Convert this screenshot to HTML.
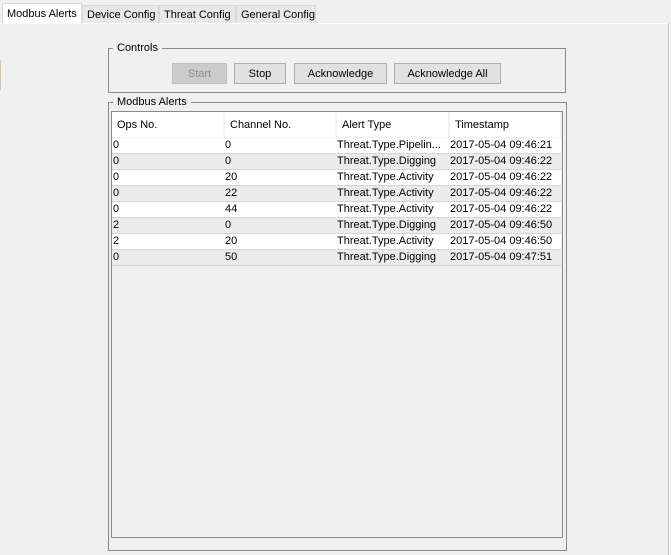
<!DOCTYPE html>
<html><head><style>
*{margin:0;padding:0;box-sizing:border-box}
body{width:671px;height:555px;background:#f0f0f0;font-family:"Liberation Sans",Arial,sans-serif;font-size:11px;color:#000;position:relative;overflow:hidden}
.abs{position:absolute}
.tab{position:absolute;top:5px;height:18px;border:1px solid #d9d9d9;border-bottom:none;background:#e8e8e8;padding:3px 4px 0;white-space:nowrap;font-size:11px}
.sel{top:3px;height:21px;background:#fff;border-color:#d9d9d9;padding-top:4px;z-index:2}
.grp{position:absolute;border:1px solid #8a8a8a}
.lbl{position:absolute;background:#f0f0f0;padding:0 4px;top:-7px;left:4px}
.btn{position:absolute;top:63px;height:21px;border:1px solid #adadad;background:#e1e1e1;text-align:center;line-height:20px}
table{border-collapse:collapse;table-layout:fixed;position:absolute;left:112px;top:112px;width:449px}
td{height:16px;padding:0 1px;white-space:nowrap;overflow:hidden;font-size:11px;line-height:15px}
th{height:25px;font-weight:normal;text-align:left;padding-left:5px;padding-top:2px;background:#fff;border-right:2px solid #f0f0f0;border-bottom:1px solid #f0f0f0}
tr.o td{background:#fff}tr.e td{background:#ececec}
tr td{border-bottom:1px solid #d4d4d4}
</style></head><body>
<div class="abs" style="left:0;top:23px;width:668px;height:1px;background:#fff"></div>
<div class="abs" style="left:668px;top:23px;width:1px;height:532px;background:#c8c8c8"></div>
<div class="abs" style="left:0;top:60px;width:1px;height:30px;background:#d0c8b0"></div>
<div class="tab sel" style="left:2px;width:80px">Modbus Alerts</div>
<div class="tab" style="left:82px;width:77px">Device Config</div>
<div class="tab" style="left:159px;width:77px">Threat Config</div>
<div class="tab" style="left:236px;width:80px">General Config</div>

<div class="grp" style="left:108px;top:48px;width:458px;height:45px"><span class="lbl">Controls</span></div>
<div class="btn" style="left:172px;width:55px;color:#8d8d8d;background:#cccccc;border-color:#bfbfbf">Start</div>
<div class="btn" style="left:234px;width:52px">Stop</div>
<div class="btn" style="left:294px;width:93px">Acknowledge</div>
<div class="btn" style="left:394px;width:107px">Acknowledge All</div>

<div class="grp" style="left:108px;top:102px;width:459px;height:449px"><span class="lbl">Modbus Alerts</span></div>
<div class="abs" style="left:111px;top:111px;width:452px;height:427px;border:1px solid #8a8a8a"></div>
<table>
<colgroup><col style="width:112px"><col style="width:112px"><col style="width:113px"><col style="width:112px"></colgroup>
<tr><th>Ops No.</th><th>Channel No.</th><th>Alert Type</th><th>Timestamp</th></tr>
<tr class="o"><td>0</td><td>0</td><td>Threat.Type.Pipelin...</td><td>2017-05-04 09:46:21</td></tr>
<tr class="e"><td>0</td><td>0</td><td>Threat.Type.Digging</td><td>2017-05-04 09:46:22</td></tr>
<tr class="o"><td>0</td><td>20</td><td>Threat.Type.Activity</td><td>2017-05-04 09:46:22</td></tr>
<tr class="e"><td>0</td><td>22</td><td>Threat.Type.Activity</td><td>2017-05-04 09:46:22</td></tr>
<tr class="o"><td>0</td><td>44</td><td>Threat.Type.Activity</td><td>2017-05-04 09:46:22</td></tr>
<tr class="e"><td>2</td><td>0</td><td>Threat.Type.Digging</td><td>2017-05-04 09:46:50</td></tr>
<tr class="o"><td>2</td><td>20</td><td>Threat.Type.Activity</td><td>2017-05-04 09:46:50</td></tr>
<tr class="e"><td>0</td><td>50</td><td>Threat.Type.Digging</td><td>2017-05-04 09:47:51</td></tr>
</table>
</body></html>
